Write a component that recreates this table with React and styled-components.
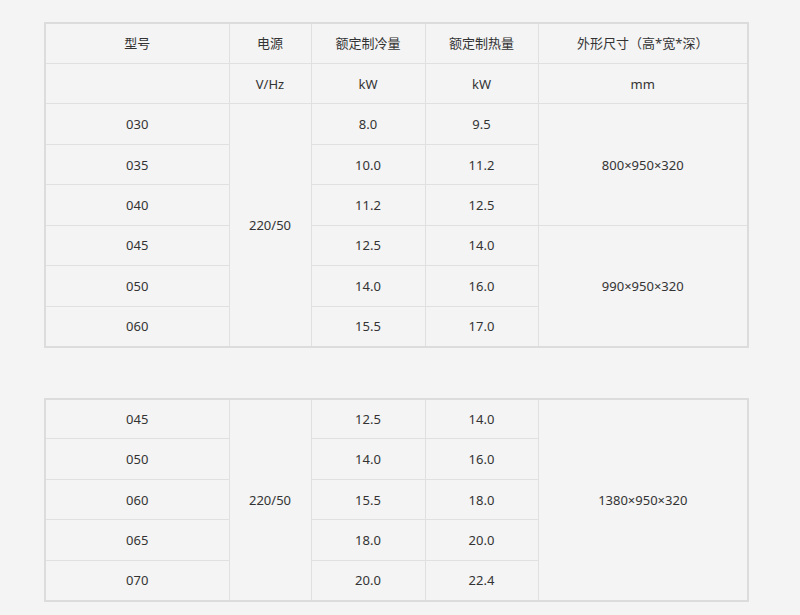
import React from "react";
import styled, { createGlobalStyle } from "styled-components";

const Global = createGlobalStyle`
  html, body { margin: 0; padding: 0; background: #f4f4f4; }
  body { font-family: "Noto Sans", "Noto Sans CJK SC", sans-serif; }
`;

const Page = styled.div`
  padding: 22px 0 0 44px;
  display: flex;
  flex-direction: column;
  gap: 50px;
`;

const Table = styled.table`
  border-collapse: collapse;
  width: 703px;
  table-layout: fixed;
  border: 2px solid #dcdcdc;
  color: #333;
  font-size: 13px;
`;

const Row = styled.tr`
  height: 40.45px;
`;

const Cell = styled.td`
  border: 1px solid #e0e0e0;
  text-align: center;
  vertical-align: middle;
  padding: 0;
  line-height: 18px;
`;

const cols = [184, 82, 114, 113, 210];

const Cols = () => (
  <colgroup>
    {cols.map((w, i) => (
      <col key={i} style={{ width: w }} />
    ))}
  </colgroup>
);

const t1 = [
  ["030", "8.0", "9.5"],
  ["035", "10.0", "11.2"],
  ["040", "11.2", "12.5"],
  ["045", "12.5", "14.0"],
  ["050", "14.0", "16.0"],
  ["060", "15.5", "17.0"],
];

const t2 = [
  ["045", "12.5", "14.0"],
  ["050", "14.0", "16.0"],
  ["060", "15.5", "18.0"],
  ["065", "18.0", "20.0"],
  ["070", "20.0", "22.4"],
];

export default function App() {
  return (
    <>
      <Global />
      <Page>
        <Table>
          <Cols />
          <tbody>
            <Row>
              <Cell>型号</Cell>
              <Cell>电源</Cell>
              <Cell>额定制冷量</Cell>
              <Cell>额定制热量</Cell>
              <Cell>外形尺寸（高*宽*深）</Cell>
            </Row>
            <Row>
              <Cell></Cell>
              <Cell>V/Hz</Cell>
              <Cell>kW</Cell>
              <Cell>kW</Cell>
              <Cell>mm</Cell>
            </Row>
            {t1.map((r, i) => (
              <Row key={r[0]}>
                <Cell>{r[0]}</Cell>
                {i === 0 && <Cell rowSpan={6}>220/50</Cell>}
                <Cell>{r[1]}</Cell>
                <Cell>{r[2]}</Cell>
                {i === 0 && <Cell rowSpan={3}>800×950×320</Cell>}
                {i === 3 && <Cell rowSpan={3}>990×950×320</Cell>}
              </Row>
            ))}
          </tbody>
        </Table>
        <Table>
          <Cols />
          <tbody>
            {t2.map((r, i) => (
              <Row key={r[0]}>
                <Cell>{r[0]}</Cell>
                {i === 0 && <Cell rowSpan={5}>220/50</Cell>}
                <Cell>{r[1]}</Cell>
                <Cell>{r[2]}</Cell>
                {i === 0 && <Cell rowSpan={5}>1380×950×320</Cell>}
              </Row>
            ))}
          </tbody>
        </Table>
      </Page>
    </>
  );
}
